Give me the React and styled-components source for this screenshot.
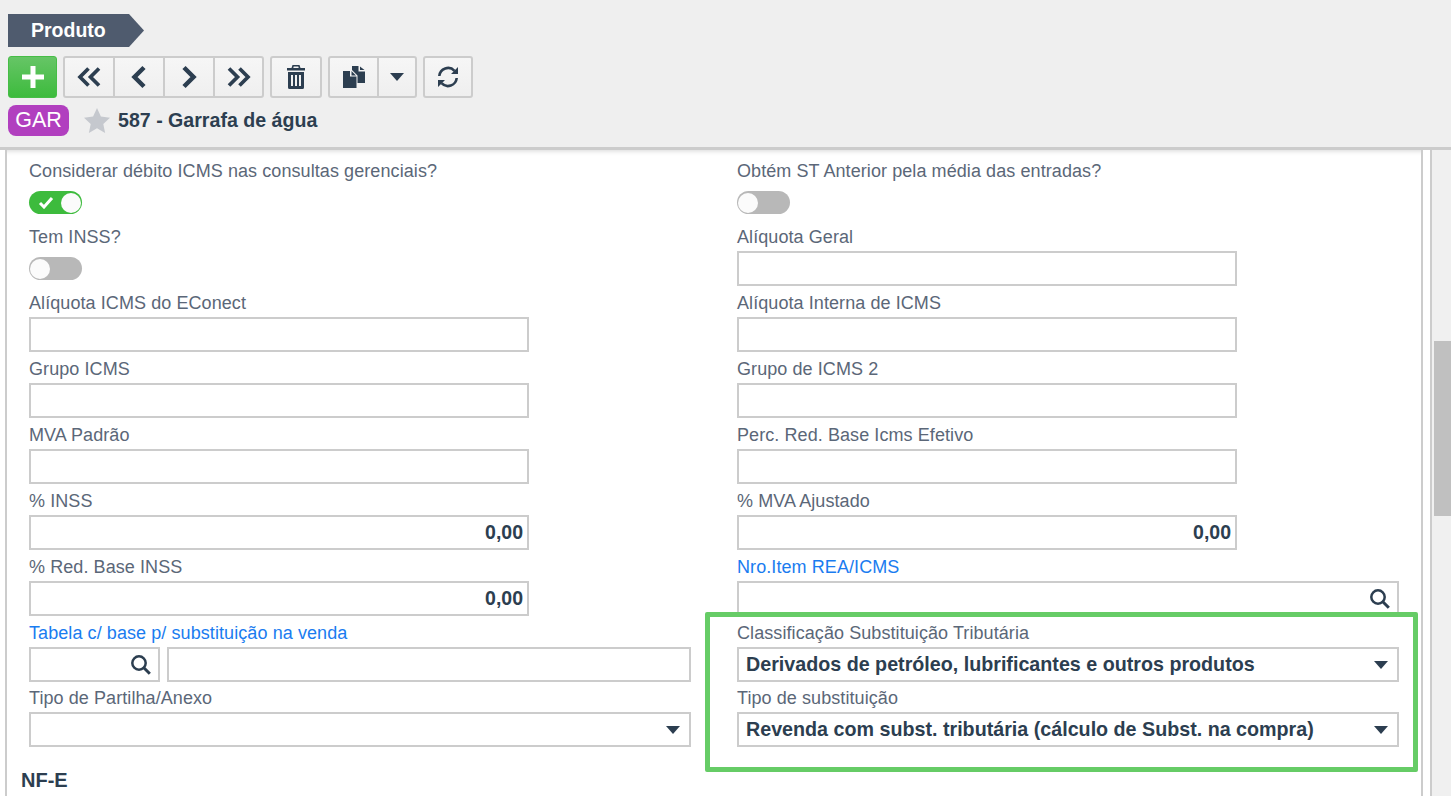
import React from 'react';
import styled, { createGlobalStyle } from 'styled-components';

const leftFields = [
  { label: 'Considerar débito ICMS nas consultas gerenciais?', kind: 'switch', on: true },
  { label: 'Tem INSS?', kind: 'switch' },
  { label: 'Alíquota ICMS do EConect', short: true },
  { label: 'Grupo ICMS', short: true },
  { label: 'MVA Padrão', short: true },
  { label: '% INSS', short: true, value: '0,00' },
  { label: '% Red. Base INSS', short: true, value: '0,00' },
  { label: 'Tabela c/ base p/ substituição na venda', link: true, kind: 'lookup', tight: true },
  { label: 'Tipo de Partilha/Anexo', kind: 'select' },
];

const rightFields = [
  { label: 'Obtém ST Anterior pela média das entradas?', kind: 'switch' },
  { label: 'Alíquota Geral', short: true },
  { label: 'Alíquota Interna de ICMS', short: true },
  { label: 'Grupo de ICMS 2', short: true },
  { label: 'Perc. Red. Base Icms Efetivo', short: true },
  { label: '% MVA Ajustado', short: true, value: '0,00' },
  { label: 'Nro.Item REA/ICMS', link: true, kind: 'search' },
  { label: 'Classificação Substituição Tributária', kind: 'select', tight: true, text: 'Derivados de petróleo, lubrificantes e outros produtos' },
  { label: 'Tipo de substituição', kind: 'select', text: 'Revenda com subst. tributária (cálculo de Subst. na compra)' },
];

const SearchIcon = () => (
  <IconEnd width="20" height="20" viewBox="0 0 20 20" fill="none" stroke="#2c3e50">
    <circle cx="8" cy="8" r="6.7" strokeWidth="2.5" />
    <path d="M12.800 12.800l6 6" strokeWidth="3" />
  </IconEnd>
);

const Caret = () => (
  <CaretEnd width="14" height="8" viewBox="0 0 14 8" fill="#2c3e50">
    <path d="M0 0h14L7 8z" />
  </CaretEnd>
);

function Field({ field }) {
  if (field.kind === 'switch') {
    return (
      <FieldBox>
        <Label>{field.label}</Label>
        <Switch $on={field.on}>
          {field.on && (
            <svg width="16" height="13" viewBox="0 0 16 13" fill="none" stroke="#fff" strokeWidth="3">
              <path d="M2 7l4 4 8-9" />
            </svg>
          )}
          <Knob $on={field.on} />
        </Switch>
      </FieldBox>
    );
  }
  if (field.kind === 'lookup') {
    return (
      <FieldBox $tight={field.tight}>
        <Label $link>{field.label}</Label>
        <LookupRow>
          <CodeInput>
            <SearchIcon />
          </CodeInput>
          <Input />
        </LookupRow>
      </FieldBox>
    );
  }
  return (
    <FieldBox $tight={field.tight}>
      <Label $link={field.link}>{field.label}</Label>
      <Input $short={field.short}>
        {field.text && <ValueText>{field.text}</ValueText>}
        {field.value && <AmountText>{field.value}</AmountText>}
        {field.kind === 'search' && <SearchIcon />}
        {field.kind === 'select' && <Caret />}
      </Input>
    </FieldBox>
  );
}

export default function App() {
  return (
    <Page>
      <GlobalStyle />
      <Header>
        <TitleTag>Produto</TitleTag>
        <Toolbar>
          <AddButton>
            <svg width="22" height="22" viewBox="0 0 22 22" fill="#fff">
              <path d="M8.500 0h5v8.500H22v5h-8.500V22h-5v-8.500H0v-5h8.500z" />
            </svg>
          </AddButton>
          <ButtonGroup>
            <ToolButton $w={48}>
              <svg width="26" height="24" viewBox="0 0 26 24" fill="none" stroke="#2c3e50" strokeWidth="3.700">
                <path d="M12.500 3.500L4 12l8.500 8.500M23 3.500L14.500 12l8.500 8.500" />
              </svg>
            </ToolButton>
            <ToolButton>
              <svg width="18" height="24" viewBox="0 0 18 24" fill="none" stroke="#2c3e50" strokeWidth="4.500">
                <path d="M14 2.500l-9.500 9.500 9.500 9.500" />
              </svg>
            </ToolButton>
            <ToolButton>
              <svg width="18" height="24" viewBox="0 0 18 24" fill="none" stroke="#2c3e50" strokeWidth="4.500">
                <path d="M4 2.500l9.500 9.500-9.500 9.500" />
              </svg>
            </ToolButton>
            <ToolButton $w={49}>
              <svg width="26" height="24" viewBox="0 0 26 24" fill="none" stroke="#2c3e50" strokeWidth="3.700">
                <path d="M3 3.500l8.500 8.500L3 20.500M13.500 3.500L22 12l-8.500 8.500" />
              </svg>
            </ToolButton>
          </ButtonGroup>
          <ButtonGroup>
            <ToolButton $w={48}>
              <svg width="18" height="24" viewBox="0 0 18 24" fill="#2c3e50">
                <path d="M5.500 0h7l1 3H18v2.500H0V3h4.500zM6.700 1.500L6.300 3h5.400l-.4-1.500zM1 7h16v15.500a1.500 1.500 0 0 1-1.500 1.500h-13A1.500 1.500 0 0 1 1 22.500zm3 3v11h2V10zm4 0v11h2V10zm4 0v11h2V10z" fillRule="evenodd" />
              </svg>
            </ToolButton>
          </ButtonGroup>
          <ButtonGroup>
            <ToolButton $w={47}>
              <svg width="22" height="22" viewBox="0 0 22 22" fill="#2c3e50">
                <path d="M0 5h7v5.500h6.500V22H0zM8.500 5l4.500 4.500H8.500zM9 0h6.500v5.500H22V17h-7.500V9.500L9 4zM17 .5L21.500 4H17z" />
              </svg>
            </ToolButton>
            <ToolButton $w={38}>
              <Caret />
            </ToolButton>
          </ButtonGroup>
          <ButtonGroup>
            <ToolButton $w={46}>
              <svg width="22" height="22" viewBox="0 0 22 22" fill="none" stroke="#2c3e50" strokeWidth="2.600">
                <path d="M2.300 10a8.800 8.800 0 0 1 15.200-5.200M19.700 12a8.800 8.800 0 0 1-15.200 5.200" />
                <path d="M21 1v7h-7zM1 21v-7h7z" fill="#2c3e50" stroke="none" />
              </svg>
            </ToolButton>
          </ButtonGroup>
        </Toolbar>
        <RecordRow>
          <Badge>GAR</Badge>
          <svg width="26" height="25" viewBox="0 0 24 23" fill="#c5c8ce">
            <path d="M12 0l3.600 7.900 8.400 1-6.200 5.800 1.700 8.300-7.500-4.300L4.500 23l1.700-8.300L0 8.900l8.400-1z" />
          </svg>
          <RecordTitle>587 - Garrafa de água</RecordTitle>
        </RecordRow>
      </Header>
      <Body>
        <Panel>
          <FormGrid>
            <Column>
              {leftFields.map(field => (
                <Field key={field.label} field={field} />
              ))}
            </Column>
            <Column>
              {rightFields.map(field => (
                <Field key={field.label} field={field} />
              ))}
            </Column>
          </FormGrid>
          <SectionTitle>NF-E</SectionTitle>
          <Highlight />
        </Panel>
        <ScrollTrack>
          <ScrollThumb />
        </ScrollTrack>
      </Body>
    </Page>
  );
}

const GlobalStyle = createGlobalStyle`
  html, body {
    margin: 0;
    height: 100%;
    overflow: hidden;
    background: #fff;
  }
  * {
    box-sizing: border-box;
  }
`;

const Page = styled.div`
  height: 796px;
  display: flex;
  flex-direction: column;
  font-family: 'Liberation Sans', Arial, sans-serif;
  color: #2c3e50;
`;

const Header = styled.header`
  height: 150px;
  flex-shrink: 0;
  padding: 14px 8px 0;
  background: #efefef;
  border-bottom: 3px solid #cccccc;
`;

const TitleTag = styled.div`
  width: 136px;
  height: 33px;
  padding-left: 23px;
  line-height: 32px;
  font-size: 19.5px;
  font-weight: bold;
  color: #fff;
  background: #4f5b6e;
  clip-path: polygon(0 0, 121px 0, 136px 50%, 121px 100%, 0 100%);
`;

const Toolbar = styled.div`
  display: flex;
  gap: 6px;
  margin-top: 9px;
`;

const AddButton = styled.div`
  width: 49px;
  height: 42px;
  display: flex;
  align-items: center;
  justify-content: center;
  background: linear-gradient(#66c566, #3dbb3d);
  border: 1px solid #46bd46;
  border-radius: 3px;
`;

const ButtonGroup = styled.div`
  display: flex;
  height: 42px;
  background: linear-gradient(#f6f6f6, #efefef);
  border: 2px solid #cccccc;
  border-radius: 3px;
`;

const ToolButton = styled.div`
  width: ${props => props.$w || 50}px;
  display: flex;
  align-items: center;
  justify-content: center;
  & + & {
    border-left: 2px solid #cccccc;
  }
  & svg {
    margin: 0;
  }
`;

const RecordRow = styled.div`
  display: flex;
  align-items: center;
  gap: 14px;
  margin-top: 7px;
`;

const Badge = styled.div`
  width: 61px;
  height: 31px;
  margin-right: 1px;
  text-align: center;
  line-height: 30px;
  font-size: 21.5px;
  color: #fff;
  background: #b13fbf;
  border-radius: 8px;
`;

const RecordTitle = styled.div`
  margin-left: -6px;
  font-size: 19.6px;
  font-weight: bold;
  color: #2c3e50;
`;

const Body = styled.div`
  flex: 1;
  min-height: 0;
  display: flex;
  padding-left: 5px;
`;

const Panel = styled.main`
  position: relative;
  width: 1418px;
  padding: 12px 22px 0;
  border-left: 2px solid #cccccc;
  border-right: 2px solid #cccccc;
  box-shadow: inset 0 6px 5px -5px #d8d8d8;
`;

const FormGrid = styled.div`
  display: grid;
  grid-template-columns: 662px 662px;
  column-gap: 46px;
`;

const Column = styled.div`
  display: flex;
  flex-direction: column;
`;

const FieldBox = styled.div`
  height: ${props => (props.$tight ? 65 : 66)}px;
`;

const Label = styled.div`
  height: 23px;
  line-height: 18px;
  font-size: 18px;
  letter-spacing: 0.08px;
  color: ${props => (props.$link ? '#1a7cf0' : '#5b6778')};
  white-space: nowrap;
`;

const Input = styled.div`
  flex: 1;
  width: ${props => (props.$short ? '500px' : 'auto')};
  height: 35px;
  padding: 0 7px;
  display: flex;
  align-items: center;
  background: #fff;
  border: 2px solid #cccccc;
`;

const IconEnd = styled.svg`
  margin-left: auto;
  flex-shrink: 0;
`;

const CaretEnd = styled(IconEnd)`
  margin-right: 2px;
`;

const ValueText = styled.span`
  font-size: 19.7px;
  font-weight: bold;
  color: #2c3e50;
`;

const AmountText = styled(ValueText)`
  margin-left: auto;
  margin-right: -3px;
  font-size: 19.5px;
`;

const LookupRow = styled.div`
  display: flex;
  gap: 7px;
`;

const CodeInput = styled(Input)`
  flex: none;
  width: 131px;
`;

const Switch = styled.div`
  position: relative;
  width: 53px;
  height: 23px;
  margin-top: 6px;
  padding-left: 9px;
  display: flex;
  align-items: center;
  background: ${props => (props.$on ? '#3dbb3d' : '#b8b8b8')};
  border-radius: 12px;
`;

const Knob = styled.span`
  position: absolute;
  top: 1.5px;
  left: ${props => (props.$on ? '32px' : '1px')};
  width: 20px;
  height: 20px;
  background: #fbfbfb;
  border-radius: 50%;
`;

const SectionTitle = styled.h3`
  margin: 13px 0 0 -8px;
  font-size: 20px;
  line-height: 24px;
  font-weight: bold;
  color: #2c3e50;
`;

const Highlight = styled.div`
  position: absolute;
  top: 462px;
  left: 698px;
  width: 713px;
  height: 160px;
  border: 5px solid #66cc66;
  border-radius: 2px;
  pointer-events: none;
`;

const ScrollTrack = styled.aside`
  flex: 1;
  margin-left: 7px;
  padding: 191px 0 0 2px;
  background: #f0f0f0;
  border-left: 2px solid #cccccc;
`;

const ScrollThumb = styled.div`
  height: 175px;
  background: #c0c0c0;
`;
